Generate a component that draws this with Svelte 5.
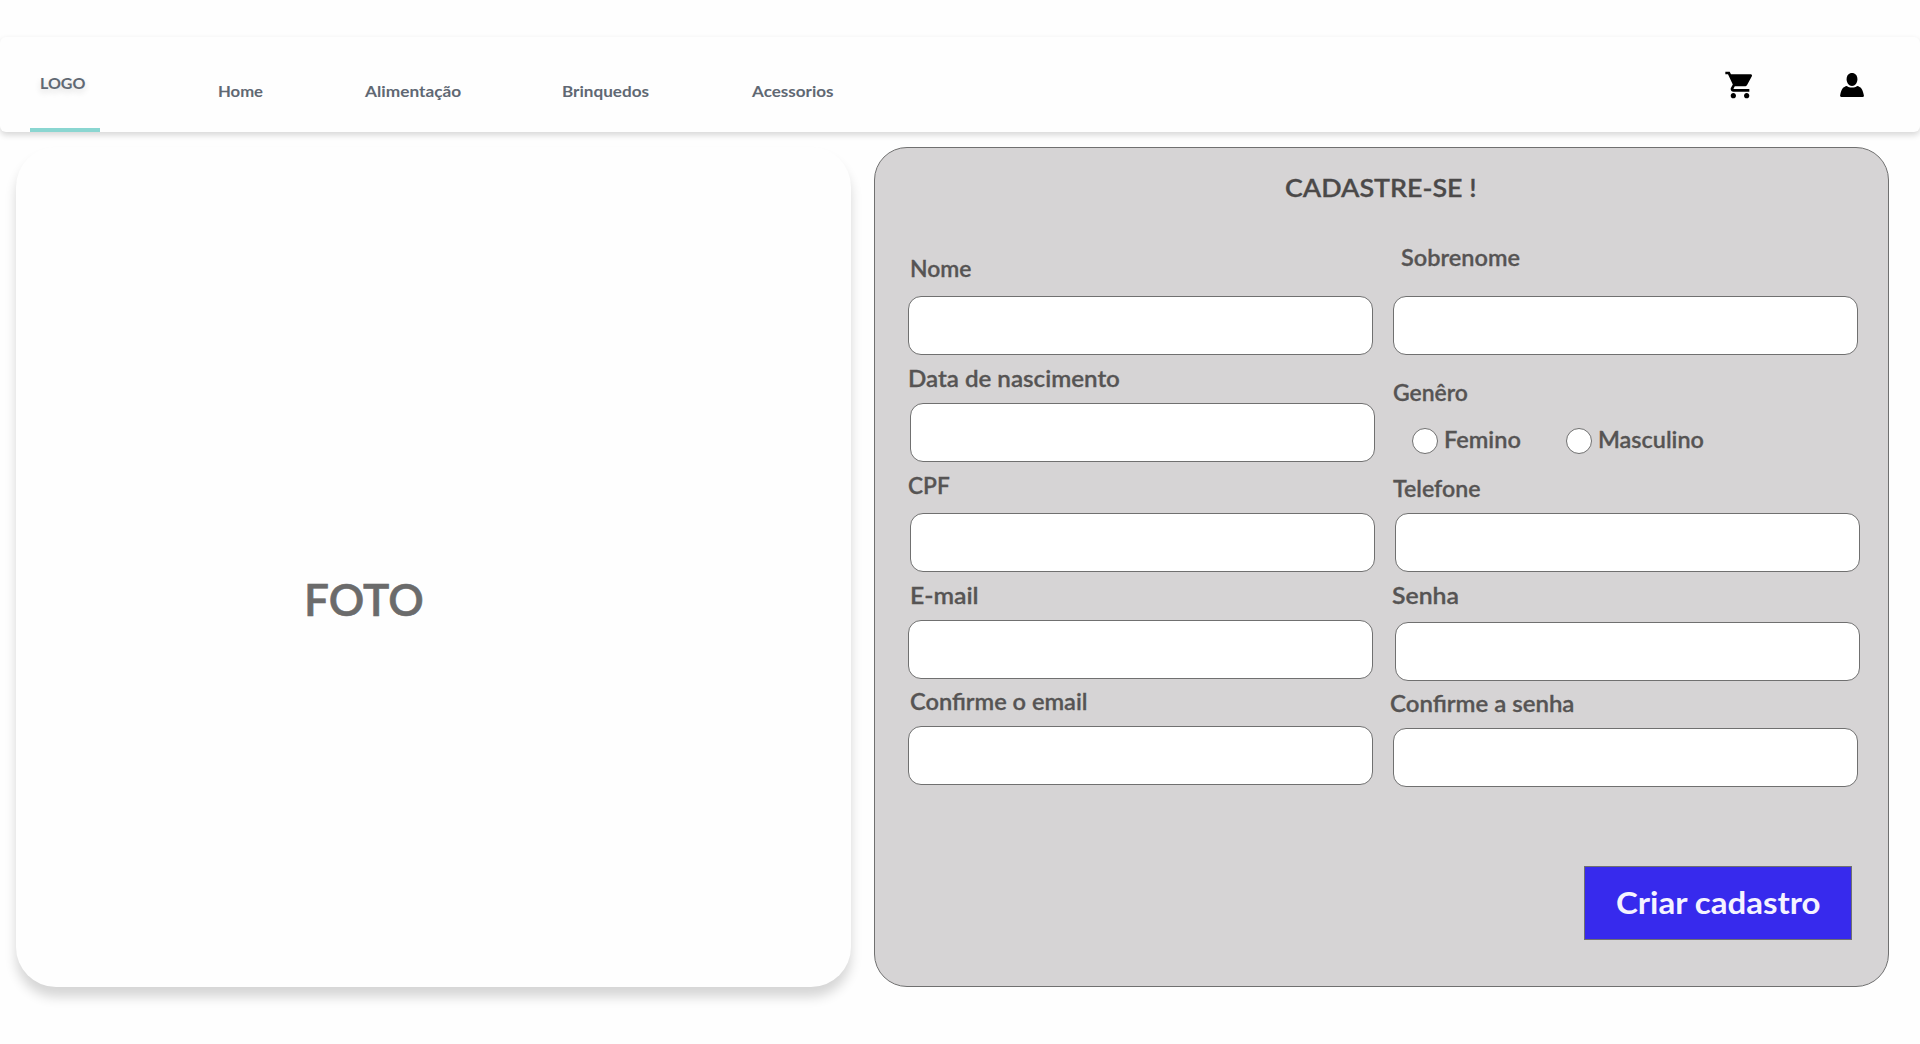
<script>
  // Stretches a line of text so that its drawn glyphs span exactly `width` pixels.
  function span(node, width) {
    const css = getComputedStyle(node);
    const ctx = document.createElement('canvas').getContext('2d');
    ctx.font = `${css.fontWeight} ${css.fontSize} ${css.fontFamily}`;
    const m = ctx.measureText(node.textContent);
    const scale = width / (m.actualBoundingBoxLeft + m.actualBoundingBoxRight);
    node.style.transform = `translateX(${m.actualBoundingBoxLeft * scale}px) scaleX(${scale})`;
  }

  const links = [
    { text: 'Home', width: 44.5, gap: 101 },
    { text: 'Alimentação', width: 97, gap: 102.3 },
    { text: 'Brinquedos', width: 86, gap: 101.7 },
    { text: 'Acessorios', width: 82.5, gap: 0 }
  ];

  // lead: space above the label; drop: space between label and box;
  // inset / shift: horizontal start of the label and of the box.
  const left = [
    { text: 'Nome', type: 'text', width: 60.5, lead: 36, drop: 12, inset: 3, shift: 0 },
    { text: 'Data de nascimento', type: 'text', width: 210, lead: 11, drop: 9, inset: 0.5, shift: 2 },
    { text: 'CPF', type: 'text', width: 42, lead: 11, drop: 12, inset: 0.3, shift: 2 },
    { text: 'E-mail', type: 'email', width: 66, lead: 11, drop: 9, inset: 2.5, shift: 0 },
    { text: 'Confirme o email', type: 'email', width: 176, lead: 10, drop: 9, inset: 2, shift: 0 }
  ];
  const rightTop = { text: 'Sobrenome', type: 'text', width: 119, lead: 25, drop: 23, inset: 8, shift: 0 };
  const rightRest = [
    { text: 'Telefone', type: 'tel', width: 87.5, lead: 20, drop: 9, inset: -0.3, shift: 2 },
    { text: 'Senha', type: 'password', width: 65.5, lead: 11, drop: 11, inset: -1, shift: 2 },
    { text: 'Confirme a senha', type: 'password', width: 183, lead: 10, drop: 9, inset: -3, shift: 0 }
  ];
  const genders = [
    { text: 'Femino', width: 75 },
    { text: 'Masculino', width: 104 }
  ];
</script>

{#snippet field(f)}
  <label
    class="field"
    style="--lead:{f.lead}px; --drop:{f.drop}px; --inset:{f.inset}px; --shift:{f.shift}px"
  >
    <span class="caption"><span class="text" use:span={f.width}>{f.text}</span></span>
    <input class="box" type={f.type} />
  </label>
{/snippet}

<div class="page">
  <header class="bar">
    <div class="logo"><span class="text" use:span={44.5}>LOGO</span></div>
    <nav class="links">
      {#each links as l}
        <a class="link" href="#top" style="width:{l.width}px; margin-right:{l.gap}px">
          <span class="text" use:span={l.width}>{l.text}</span>
        </a>
      {/each}
    </nav>
    <div class="tools">
      <svg class="cart" viewBox="0 0 24 24" width="32" height="32">
        <path d="M7 18c-1.1 0-1.99.9-1.99 2S5.9 22 7 22s2-.9 2-2-.9-2-2-2zM1 2v2h2l3.6 7.59-1.35 2.45c-.16.28-.25.61-.25.96 0 1.1.9 2 2 2h12v-2H7.42c-.14 0-.25-.11-.25-.25l.03-.12.9-1.63h7.45c.75 0 1.41-.41 1.75-1.03l3.58-6.49c.08-.14.12-.31.12-.48 0-.55-.45-1-1-1H5.21l-.94-2H1zm16 16c-1.1 0-1.99.9-1.99 2s.89 2 1.99 2 2-.9 2-2-.9-2-2-2z" />
      </svg>
      <svg class="user" viewBox="0 0 24 24" width="24" height="24">
        <path d="M12 0c3.2 0 5.4 2.4 5.4 6.2 0 3.7-2.3 6.7-5.4 6.7S6.600 9.900 6.600 6.200C6.600 2.400 8.800 0 12 0z" />
        <path d="M6.900 13C8.100 14 9.900 14.600 12 14.600s3.900-.6 5.100-1.600c3.700.7 5.600 3.200 6.700 8.900.3 1.500 0 2.100-1.100 2.100H1.300C.2 24-.1 23.400.2 21.900 1.300 16.200 3.200 13.700 6.900 13z" />
      </svg>
    </div>
  </header>

  <main class="content">
    <section class="photo"><span class="text" use:span={115.5}>FOTO</span></section>

    <form class="panel">
      <h1 class="title"><span class="text" use:span={189.5}>CADASTRE-SE !</span></h1>
      <div class="columns">
        <div class="column">
          {#each left as f}{@render field(f)}{/each}
        </div>
        <div class="column">
          {@render field(rightTop)}
          <fieldset class="gender">
            <div class="caption"><span class="text" use:span={74}>Genêro</span></div>
            <div class="options">
              {#each genders as g}
                <label class="option">
                  <input class="radio" type="radio" name="gender" />
                  <span class="text" use:span={g.width}>{g.text}</span>
                </label>
              {/each}
            </div>
          </fieldset>
          {#each rightRest as f}{@render field(f)}{/each}
        </div>
      </div>
      <button class="submit" type="button"><span class="text" use:span={204}>Criar cadastro</span></button>
    </form>
  </main>
</div>

<style>
  :global(body) {
    background: #fefefe;
  }
  .page {
    width: 1920px;
    height: 1044px;
    box-sizing: border-box;
    padding-top: 37px;
    overflow: hidden;
    font-family: Lato, 'Open Sans', sans-serif;
    font-weight: 600;
  }
  .text {
    display: inline-block;
    white-space: nowrap;
    transform-origin: 0 50%;
  }
  .bar {
    display: flex;
    height: 95px;
    background: #fefefe;
    border-radius: 6px;
    box-shadow: 0 3px 6px rgba(0, 0, 0, 0.16);
    font-size: 16px;
    font-weight: 700;
    line-height: 20px;
    color: #606873;
  }
  .logo {
    box-sizing: border-box;
    width: 70px;
    margin-left: 30px;
    padding: 36px 0 0 10.5px;
    border-bottom: 4px solid #8ad6d1;
    text-shadow: 0 3px 6px rgba(0, 0, 0, 0.16);
  }
  .links {
    display: flex;
    padding: 44px 0 0 118.5px;
  }
  .link {
    color: inherit;
    text-decoration: none;
  }
  .tools {
    display: flex;
    margin-left: auto;
    padding: 32px 56px 0 0;
    gap: 84px;
  }
  .user {
    margin-top: 4px;
  }
  .content {
    display: flex;
    gap: 23px;
    padding: 15px 0 0 16px;
  }
  .photo {
    box-sizing: border-box;
    width: 835px;
    height: 840px;
    padding: 425px 0 0 291px;
    background: #fefefe;
    border-radius: 40px;
    box-shadow: 0 10px 12px rgba(0, 0, 0, 0.16);
    font-size: 45px;
    line-height: 54px;
    color: #6b6b6b;
    -webkit-text-stroke: 0.6px;
  }
  .panel {
    box-sizing: border-box;
    display: flex;
    flex-direction: column;
    width: 1015px;
    height: 840px;
    padding: 0 30px 0 33px;
    background: #d6d4d5;
    border: 1px solid #707070;
    border-radius: 33px;
  }
  .title {
    margin: 23px 0 0 377.5px;
    font-size: 25.5px;
    font-weight: 600;
    line-height: 32px;
    color: #4b4949;
    -webkit-text-stroke: 0.3px;
  }
  .columns {
    display: flex;
    gap: 20px;
    padding-top: 17px;
  }
  .columns .text {
    translate: 0 -0.6px;
  }
  .column {
    width: 465px;
  }
  .field {
    display: block;
    padding-top: var(--lead);
  }
  .caption {
    display: block;
    height: 28px;
    margin-left: var(--inset);
    font-size: 22.5px;
    line-height: 28px;
    color: #565454;
    -webkit-text-stroke: 0.3px;
  }
  .box {
    box-sizing: border-box;
    display: block;
    width: 465px;
    height: 59px;
    margin: var(--drop) 0 0 var(--shift);
    padding: 0 16px;
    background: #fff;
    border: 1px solid #707070;
    border-radius: 13px;
    font: inherit;
  }
  .gender {
    margin: 25px 0 0;
    padding: 0;
    border: 0;
  }
  .options {
    display: flex;
    gap: 46px;
    padding: 18px 0 0 19px;
    font-size: 22.5px;
    line-height: 28px;
    color: #565454;
    -webkit-text-stroke: 0.3px;
  }
  .option {
    display: flex;
    align-items: center;
    width: 108px;
    height: 30px;
  }
  .radio {
    appearance: none;
    box-sizing: border-box;
    flex: none;
    width: 26px;
    height: 26px;
    margin: 0 7px 0 0;
    background: #fff;
    border: 1px solid #707070;
    border-radius: 50%;
  }
  .submit {
    box-sizing: border-box;
    width: 268px;
    height: 74px;
    margin: 79px 6px 0 auto;
    padding: 0 0 2px 31.5px;
    background: #372aed;
    border: 1px solid #707070;
    font: 700 30px/36px Lato, 'Open Sans', sans-serif;
    text-align: left;
    color: #f5f3ff;
  }
</style>
